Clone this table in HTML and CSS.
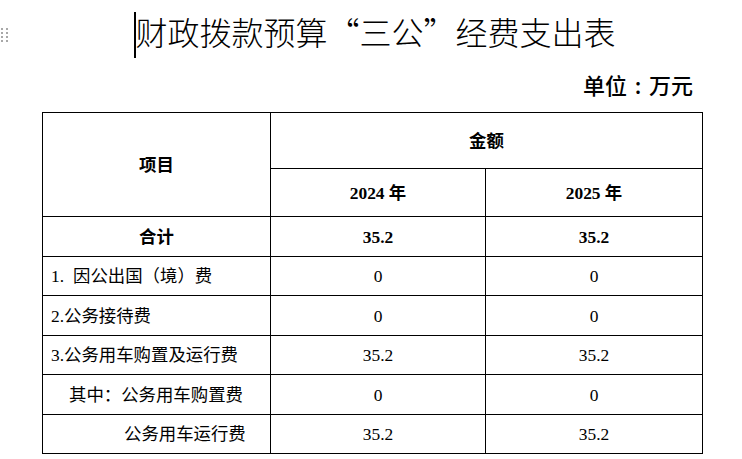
FILE: index.html
```html
<!DOCTYPE html>
<html lang="zh-CN">
<head>
<meta charset="utf-8">
<title>财政拨款预算“三公”经费支出表</title>
<link rel="stylesheet" href="styles.css">
</head>
<body>
<div class="page">
  <div class="title-row">
    <span class="handle">
      <i></i><i></i><i></i><i></i><i></i><i></i><i></i><i></i>
    </span>
    <span class="caret"></span><h1 class="title">财政拨款预算“三公”经费支出表</h1>
  </div>
  <div class="unit-row">单位<span class="colon">:</span>万元</div>
  <table class="sheet">
    <colgroup>
      <col class="c1"><col class="c2"><col class="c3">
    </colgroup>
    <tr class="r-h1">
      <th rowspan="2">项目</th>
      <th colspan="2">金额</th>
    </tr>
    <tr class="r-h2">
      <th>2024 年</th>
      <th>2025 年</th>
    </tr>
    <tr class="r-total">
      <th>合计</th>
      <th>35.2</th>
      <th>35.2</th>
    </tr>
    <tr class="r-a">
      <td class="label">1.<span class="gap"></span>因公出国（境）费</td>
      <td>0</td>
      <td>0</td>
    </tr>
    <tr class="r-b">
      <td class="label">2.公务接待费</td>
      <td>0</td>
      <td>0</td>
    </tr>
    <tr class="r-a">
      <td class="label">3.公务用车购置及运行费</td>
      <td>35.2</td>
      <td>35.2</td>
    </tr>
    <tr class="r-b">
      <td class="label indent1">其中：公务用车购置费</td>
      <td>0</td>
      <td>0</td>
    </tr>
    <tr class="r-a">
      <td class="label indent2">公务用车运行费</td>
      <td>35.2</td>
      <td>35.2</td>
    </tr>
  </table>
</div>
</body>
</html>
```

FILE: styles.css
```css
html, body {
  margin: 0;
  padding: 0;
  background: #fff;
}

.page {
  width: 742px;
  height: 459px;
  overflow: hidden;
  color: #000;
}

.title-row {
  position: relative;
  height: 62px;
  display: flex;
  align-items: center;
  justify-content: center;
  padding-left: 8px;
}

.handle {
  position: absolute;
  left: 1px;
  top: 28px;
  width: 7px;
  display: grid;
  grid-template-columns: 2px 2px;
  column-gap: 3px;
  row-gap: 2px;
}

.handle i {
  display: block;
  width: 2px;
  height: 2px;
  background: #a8a8a8;
}

.caret {
  display: inline-block;
  width: 2px;
  height: 46px;
  background: #000;
  margin-top: 8px;
}

.title {
  margin: 0;
  font-family: "Noto Sans CJK SC", sans-serif;
  font-weight: 300;
  font-size: 32px;
  line-height: 46px;
  letter-spacing: 0;
  margin-left: -1px;
}

.unit-row {
  height: 44px;
  line-height: 44px;
  text-align: right;
  padding-right: 49px;
  font-family: "Noto Sans CJK SC", sans-serif;
  font-weight: 500;
  font-size: 22px;
}

.unit-row .colon {
  display: inline-block;
  width: 22px;
  text-align: center;
}

.sheet {
  margin: 6px 0 0 42px;
  border-collapse: collapse;
  table-layout: fixed;
  width: 660px;
  font-family: "Liberation Serif", "Noto Sans CJK SC", serif;
  font-size: 17.4px;
}

.sheet col.c1 { width: 228px; }
.sheet col.c2 { width: 215px; }
.sheet col.c3 { width: 217px; }

.sheet th,
.sheet td {
  border: 1px solid #000;
  padding: 0;
  text-align: center;
  vertical-align: middle;
  line-height: 20px;
}

.sheet th {
  font-weight: 700;
}

.sheet td {
  font-weight: 400;
}

.sheet td.label {
  text-align: left;
  padding-left: 8px;
}

.sheet td.label .gap {
  display: inline-block;
  width: 9px;
}

.sheet td.indent1 { padding-left: 26px; }
.sheet td.indent2 { padding-left: 81px; }

.r-h1 { height: 56px; }
.r-h2 { height: 48px; }
.r-total { height: 40px; }
.r-a { height: 39px; }
.r-b { height: 40px; }
```
